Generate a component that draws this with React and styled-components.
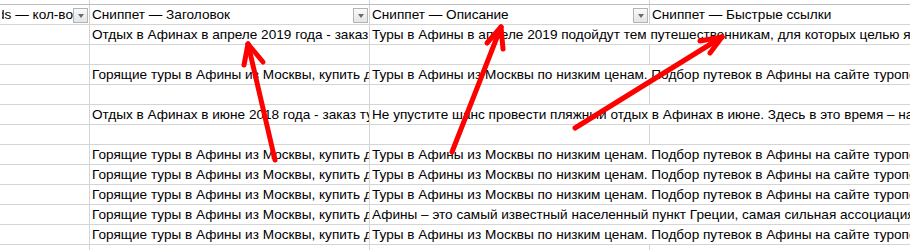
import React from "react";
import styled, { createGlobalStyle } from "styled-components";

const GlobalStyle = createGlobalStyle`
  body {
    margin: 0;
    background: #fff;
    font-family: "Liberation Sans", Arial, sans-serif;
  }
`;

const Sheet = styled.div`
  position: relative;
  width: 910px;
  height: 250px;
  overflow: hidden;
  background: #fff;
`;

const Row = styled.div`
  display: grid;
  grid-template-columns: 90px 280px 280px 1fr;
  height: ${(p) => p.$h || 20}px;
  box-sizing: border-box;
  border-bottom: 1px solid ${(p) => p.$line || "#d4d4d4"};
`;

const Cell = styled.div`
  grid-column: span ${(p) => p.$span || 1};
  box-sizing: border-box;
  border-right: ${(p) => (p.$open ? "none" : "1px solid #d4d4d4")};
  padding: 0 2px;
  font-size: 13.6px;
  line-height: 19px;
  color: #000;
  white-space: nowrap;
  overflow: hidden;
`;

const HeadCell = styled(Cell)`
  display: flex;
  align-items: flex-end;
  padding-right: 1px;
`;

const HeadText = styled.div`
  flex: 1;
  display: flex;
  justify-content: ${(p) => (p.$end ? "flex-end" : "flex-start")};
  overflow: hidden;
  align-self: stretch;

  span {
    flex-shrink: 0;
  }
`;

const FilterButton = styled.div`
  width: 15px;
  height: 15px;
  box-sizing: border-box;
  margin-bottom: 1px;
  border: 1px solid #b4b4b4;
  background: linear-gradient(#fafafa, #e4e4e4);
  display: flex;
  align-items: center;
  justify-content: center;
  flex-shrink: 0;

  &::after {
    content: "";
    border-left: 3.5px solid transparent;
    border-right: 3.5px solid transparent;
    border-top: 4px solid #6b6b6b;
    margin-top: 1px;
  }
`;

const Arrows = styled.svg`
  position: absolute;
  left: 0;
  top: 0;
  pointer-events: none;
`;

const hot = "Горящие туры в Афины из Москвы, купить дешево";
const cheap =
  "Туры в Афины из Москвы по низким ценам. Подбор путевок в Афины на сайте туроператора";

const rows = [
  [
    "Отдых в Афинах в апреле 2019 года - заказ туров",
    "Туры в Афины в апреле 2019 подойдут тем путешественникам, для которых целью является",
  ],
  null,
  [hot, cheap],
  null,
  [
    "Отдых в Афинах в июне 2018 года - заказ туров",
    "Не упустите шанс провести пляжный отдых в Афинах в июне. Здесь в это время – настоящее лето",
  ],
  null,
  [hot, cheap],
  [hot, cheap],
  [hot, cheap],
  [
    hot,
    "Афины – это самый известный населенный пункт Греции, самая сильная ассоциация с",
  ],
  [hot, cheap],
  null,
];

// red annotation arrows drawn over the sheet
const arrows = [
  { from: [275, 160], to: [248, 44], barbs: [[244, 65], [263, 62]] },
  { from: [452, 152], to: [501, 27], barbs: [[487, 43], [503, 49]] },
  { from: [575, 128], to: [722, 37], barbs: [[700, 41], [710, 53]] },
];

function DataRow({ data }) {
  if (!data) {
    return (
      <Row>
        <Cell />
        <Cell />
        <Cell />
        <Cell $open />
      </Row>
    );
  }
  return (
    <Row>
      <Cell />
      <Cell>{data[0]}</Cell>
      <Cell $span={2} $open>
        {data[1]}
      </Cell>
    </Row>
  );
}

export default function App() {
  return (
    <Sheet>
      <GlobalStyle />
      <Row $h={5} $line="#bdbdbd">
        <Cell />
        <Cell />
        <Cell />
        <Cell $open />
      </Row>
      <Row>
        <HeadCell>
          <HeadText $end>
            <span>Keywords — кол-во</span>
          </HeadText>
          <FilterButton />
        </HeadCell>
        <HeadCell>
          <HeadText>
            <span>Сниппет — Заголовок</span>
          </HeadText>
          <FilterButton />
        </HeadCell>
        <HeadCell>
          <HeadText>
            <span>Сниппет — Описание</span>
          </HeadText>
          <FilterButton />
        </HeadCell>
        <HeadCell $open>
          <HeadText>
            <span>Сниппет — Быстрые ссылки</span>
          </HeadText>
        </HeadCell>
      </Row>
      {rows.map((r, i) => (
        <DataRow key={i} data={r} />
      ))}
      <Arrows width="910" height="250" viewBox="0 0 910 250">
        <g stroke="#ff0000" strokeWidth="5" strokeLinecap="round" fill="none">
          {arrows.map((a, i) => (
            <g key={i}>
              <line x1={a.from[0]} y1={a.from[1]} x2={a.to[0]} y2={a.to[1]} />
              {a.barbs.map((b, j) => (
                <line key={j} x1={a.to[0]} y1={a.to[1]} x2={b[0]} y2={b[1]} />
              ))}
            </g>
          ))}
        </g>
      </Arrows>
    </Sheet>
  );
}
